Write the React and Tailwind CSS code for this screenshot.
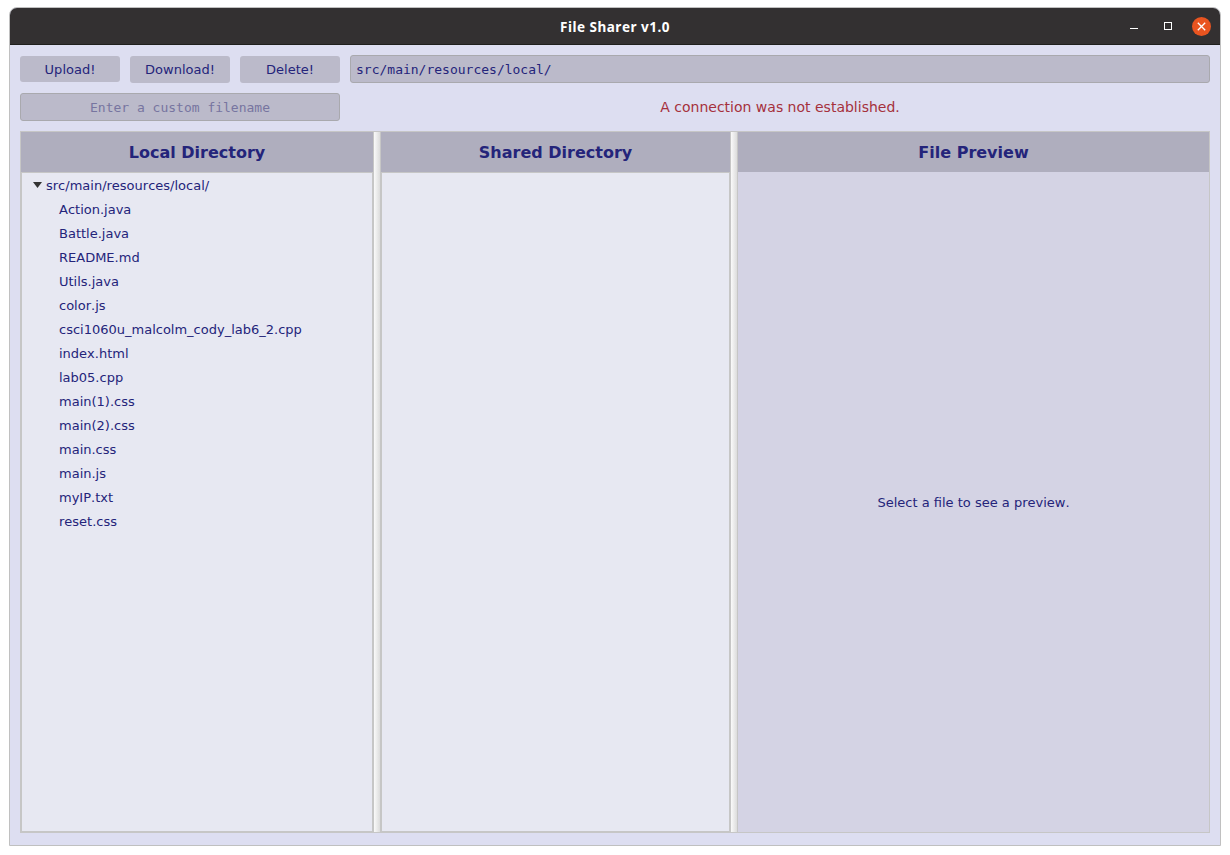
const files = [
  "Action.java",
  "Battle.java",
  "README.md",
  "Utils.java",
  "color.js",
  "csci1060u_malcolm_cody_lab6_2.cpp",
  "index.html",
  "lab05.cpp",
  "main(1).css",
  "main(2).css",
  "main.css",
  "main.js",
  "myIP.txt",
  "reset.css",
];

function TitleBar() {
  return (
    <header className="grid h-[37px] shrink-0 grid-cols-[1fr_auto_1fr] items-center rounded-t-[7px] border-b border-[#1f1f1c] bg-[#333031]">
      <span />
      <h1 className="pt-0.5 font-['Noto_Sans'] text-[13.5px] leading-[18px] font-bold tracking-[0.5px] whitespace-nowrap text-white">
        File Sharer v1.0
      </h1>
      <div className="flex items-center justify-end pr-[9px]">
        <button aria-label="Minimize" className="mr-[26px] flex h-[18px] w-2 items-end pb-1.5">
          <span className="h-px w-2 bg-white" />
        </button>
        <button aria-label="Maximize" className="mr-5 h-2 w-2 border border-white" />
        <button aria-label="Close" className="flex size-[19px] items-center justify-center rounded-full bg-[#e95420]">
          <svg width="9" height="9" viewBox="0 0 9 9" fill="none" stroke="white" strokeWidth="1.3">
            <path d="M0.8 0.8 8.2 8.2M8.2 0.8 0.8 8.2" />
          </svg>
        </button>
      </div>
    </header>
  );
}

function ActionButton({ children, className = "h-[27px] leading-[27px]" }) {
  return (
    <button className={`w-[100px] rounded-[3px] bg-[#bbbaca] text-center ${className}`}>
      {children}
    </button>
  );
}

function PaneHeader({ children }) {
  return (
    <h2 className="h-10 shrink-0 bg-[#afaebe] text-center text-base leading-[42px] font-bold">
      {children}
    </h2>
  );
}

function Divider() {
  return (
    <div className="w-1.5 shrink-0 border-y border-[#c6c6c6] bg-linear-to-r from-[#fafafa] to-[#dcdcdc]" />
  );
}

export default function App() {
  return (
    <div className="h-[855px] w-[1230px] bg-white pt-[7px] pl-[9px] font-['DejaVu_Sans',sans-serif] text-[13px] text-[#24247a] [font-kerning:none]">
      <main className="flex h-[839px] w-[1212px] flex-col rounded-t-lg border border-[#c0c0c0] bg-[#dddef1]">
        <TitleBar />
        <div className="flex min-h-0 grow flex-col px-2.5 pt-2.5 pb-3">
          <div className="flex h-7 shrink-0 gap-2.5">
            <div className="flex gap-2.5 pt-px">
              <ActionButton className="h-[26px] pt-px leading-[26px]">Upload!</ActionButton>
              <ActionButton>Download!</ActionButton>
              <ActionButton>Delete!</ActionButton>
            </div>
            <div className="grow rounded-[3px] border border-[#a9a9ae] bg-[#bbbaca] pl-[5px] font-['DejaVu_Sans_Mono',monospace] leading-[28px]">
              src/main/resources/local/
            </div>
          </div>
          <div className="mt-2.5 flex h-7 shrink-0">
            <div className="w-80 rounded-[3px] border border-[#a9a9ae] bg-[#bbbaca] text-center font-['DejaVu_Sans_Mono',monospace] leading-[28px] text-[#7775a0]">
              Enter a custom filename
            </div>
            <p className="grow pl-2.5 text-center text-sm leading-7 text-[#a5303c]">
              A connection was not established.
            </p>
          </div>
          <div className="mt-2.5 flex h-[702px]">
            <section className="flex w-[354px] flex-col border border-[#c6c6c6]">
              <PaneHeader>Local Directory</PaneHeader>
              <div className="grow border border-[#c6c6c6] bg-[#e7e8f2]">
                <div className="flex h-6 items-center pl-[10.5px]">
                  <svg width="9" height="6" viewBox="0 0 9 6" className="mr-[4.5px]">
                    <path d="M0 0h9L4.5 6z" fill="#333" />
                  </svg>
                  <span className="pt-0.5 leading-6">src/main/resources/local/</span>
                </div>
                <ul className="pl-[37px]">
                  {files.map((name) => (
                    <li key={name} className="h-6 leading-[26px]">
                      {name}
                    </li>
                  ))}
                </ul>
              </div>
            </section>
            <Divider />
            <section className="flex w-[351px] flex-col border border-[#c6c6c6]">
              <PaneHeader>Shared Directory</PaneHeader>
              <div className="grow border border-[#c6c6c6] bg-[#e7e8f2]" />
            </section>
            <Divider />
            <section className="flex w-[473px] flex-col border border-[#c6c6c6]">
              <PaneHeader>File Preview</PaneHeader>
              <div className="flex grow items-center justify-center bg-[#d4d3e4] pt-0.5">
                Select a file to see a preview.
              </div>
            </section>
          </div>
        </div>
      </main>
    </div>
  );
}
